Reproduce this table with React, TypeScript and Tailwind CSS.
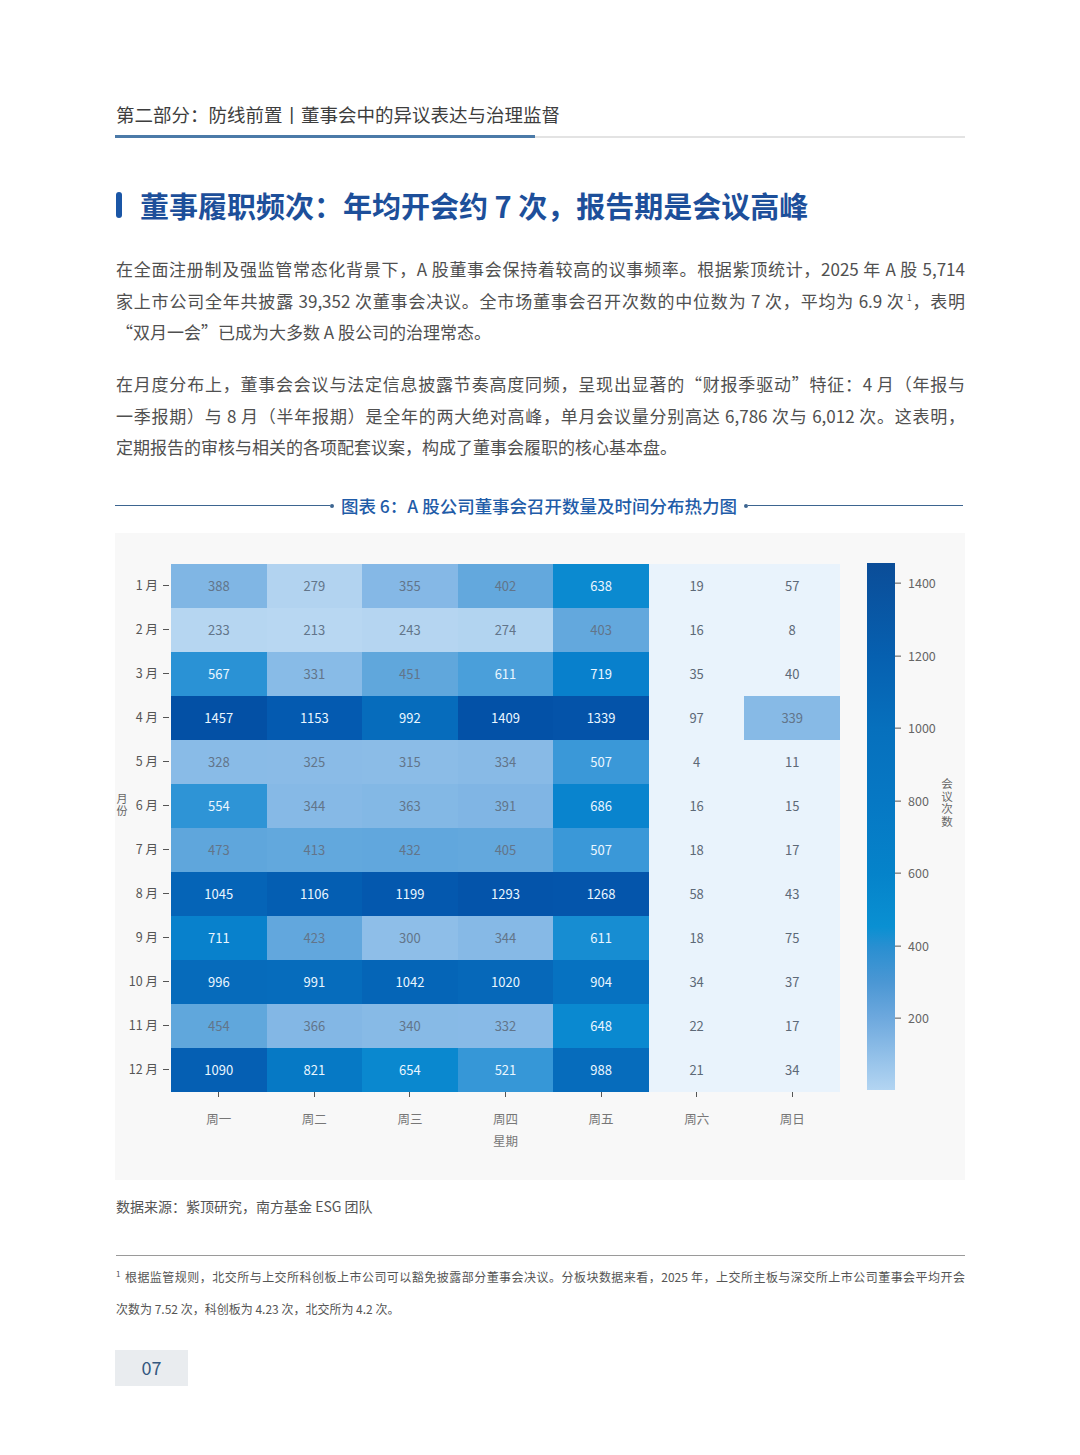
import React from "react";

const months = ["1 月", "2 月", "3 月", "4 月", "5 月", "6 月", "7 月", "8 月", "9 月", "10 月", "11 月", "12 月"];
const days = ["周一", "周二", "周三", "周四", "周五", "周六", "周日"];

const data: number[][] = [
  [388, 279, 355, 402, 638, 19, 57],
  [233, 213, 243, 274, 403, 16, 8],
  [567, 331, 451, 611, 719, 35, 40],
  [1457, 1153, 992, 1409, 1339, 97, 339],
  [328, 325, 315, 334, 507, 4, 11],
  [554, 344, 363, 391, 686, 16, 15],
  [473, 413, 432, 405, 507, 18, 17],
  [1045, 1106, 1199, 1293, 1268, 58, 43],
  [711, 423, 300, 344, 611, 18, 75],
  [996, 991, 1042, 1020, 904, 34, 37],
  [454, 366, 340, 332, 648, 22, 17],
  [1090, 821, 654, 521, 988, 21, 34],
];

// value -> colour stops, read off the picture
const stops: [number, string][] = [
  [200, "#b9d8f2"],
  [285, "#b1d3f0"],
  [300, "#8ebee8"],
  [345, "#86b9e6"],
  [395, "#7fb5e4"],
  [402, "#63a8dd"],
  [475, "#5fa6dc"],
  [505, "#3a98d8"],
  [560, "#2d93d6"],
  [640, "#0a8ad0"],
  [720, "#0880cc"],
  [830, "#0678c4"],
  [910, "#0672c1"],
  [1000, "#066bbb"],
  [1060, "#0562b5"],
  [1150, "#045ab0"],
  [1300, "#0454aa"],
  [1460, "#0350a5"],
];

const overrides: Record<string, string> = { "2-3": "#4a9fda" };

function hex(c: string) {
  return [1, 3, 5].map((i) => parseInt(c.slice(i, i + 2), 16));
}

function cellColor(v: number): string {
  if (v < 100) return "#e9f3fc";
  if (v <= stops[0][0]) return stops[0][1];
  for (let i = 1; i < stops.length; i++) {
    const [v1, c1] = stops[i];
    const [v0, c0] = stops[i - 1];
    if (v <= v1) {
      const t = (v - v0) / (v1 - v0);
      const a = hex(c0);
      const b = hex(c1);
      const m = a.map((x, k) => Math.round(x + (b[k] - x) * t));
      return `rgb(${m[0]},${m[1]},${m[2]})`;
    }
  }
  return stops[stops.length - 1][1];
}

function textColor(v: number): string {
  if (v < 100) return "#5d6977";
  if (v >= 500) return "#eaf6ff";
  return "#62758a";
}

const barTicks = [1400, 1200, 1000, 800, 600, 400, 200];
const vMin = 4;
const vMax = 1457;
const barHeight = 527;

function Heatmap() {
  return (
    <div className="bg-[#f8f8f8] pt-[31px] pb-[30px]">
      <div className="flex">
        {/* y axis title */}
        <div className="w-[13px] pl-[1px] pt-[229px] flex justify-center">
          <span className="[writing-mode:vertical-rl] text-[11px] leading-[12px] tracking-[1px] text-[#666]">月份</span>
        </div>

        {/* row labels + ticks */}
        <div className="w-[43px] flex flex-col">
          {months.map((m) => (
            <div key={m} className="h-[44px] flex items-center justify-end text-[12.5px] text-[#555]">
              <span>{m}</span>
              <span className="ml-[5px] mr-[2px] w-[6px] h-px bg-[#555]" />
            </div>
          ))}
        </div>

        {/* cells */}
        <div className="w-[669px]">
          <div className="grid grid-cols-7">
            {data.map((row, r) =>
              row.map((v, c) => (
                <div
                  key={`${r}-${c}`}
                  className="h-[44px] flex items-center justify-center text-[13px]"
                  style={{ background: overrides[`${r}-${c}`] ?? cellColor(v), color: textColor(v) }}
                >
                  {v}
                </div>
              ))
            )}
          </div>
          <div className="grid grid-cols-7">
            {days.map((d, i) => (
              <div key={d} className="flex flex-col items-center">
                <span className="w-px h-[5px] bg-[#555]" />
                <span className="mt-[13px] text-[12.5px] leading-[18px] text-[#777]">{d}</span>
                {i === 3 && <span className="mt-[4px] text-[12.5px] leading-[18px] text-[#777]">星期</span>}
              </div>
            ))}
          </div>
        </div>

        {/* colour bar */}
        <div className="ml-[27px] flex">
          <div className="w-[28px] h-[527px] -mt-px bg-[linear-gradient(to_bottom,#0b4d98_0%,#0660b0_17.7%,#0670bd_31.5%,#0678c4_45.2%,#0583ca_59%,#0a90d2_69%,#2a8fd1_73%,#4b97d4_79.6%,#6ea9de_86.5%,#b3d5f2_100%)]" />
          <div className="relative w-[46px] h-[527px] -mt-px">
            {barTicks.map((t) => (
              <div
                key={t}
                className="absolute left-0 flex items-center -translate-y-1/2"
                style={{ top: ((vMax - t) / (vMax - vMin)) * barHeight }}
              >
                <span className="w-[6px] h-px bg-[#555]" />
                <span className="ml-[7px] text-[12.5px] text-[#666]">{t}</span>
              </div>
            ))}
          </div>
          <div className="pt-[214px]">
            <span className="[writing-mode:vertical-rl] text-[11.5px] leading-[12px] tracking-[1px] text-[#666]">会议次数</span>
          </div>
        </div>
      </div>
    </div>
  );
}

function JLine({ children, last = false }: { children: React.ReactNode; last?: boolean }) {
  return (
    <div className={last ? "whitespace-nowrap" : "whitespace-nowrap text-justify [text-align-last:justify]"}>
      {children}
    </div>
  );
}

export default function App() {
  return (
    <div className="min-h-[1455px] bg-white font-['Noto_Sans_CJK_SC',sans-serif]">
      <div className="w-[850px] mx-auto pt-[101px] pb-[69px]">
        {/* page header */}
        <div className="pl-px text-[18.5px] leading-[27px] text-[#3d3d3d]">第二部分：防线前置丨董事会中的异议表达与治理监督</div>
        <div className="mt-[7px] flex items-center h-[3px]">
          <div className="w-[420px] h-[3px] bg-[#4b7aa8]" />
          <div className="flex-1 h-[2px] bg-[#e3e3e3]" />
        </div>

        {/* section title */}
        <div className="mt-[49px] flex items-center h-[36px]">
          <div className="ml-px w-[6px] h-[26px] rounded-full bg-[#1a56a6]" />
          <h1 className="ml-[18px] text-[29px] leading-[36px] font-bold text-[#1d4f9a]">
            董事履职频次：年均开会约 7 次，报告期是会议高峰
          </h1>
        </div>

        {/* body */}
        <div className="mt-[30px] pl-px text-[17px] leading-[31.5px] text-[#505050]">
          <JLine>在全面注册制及强监管常态化背景下，A 股董事会保持着较高的议事频率。根据紫顶统计，2025 年 A 股 5,714</JLine>
          <JLine>
            家上市公司全年共披露 39,352 次董事会决议。全市场董事会召开次数的中位数为 7 次，平均为 6.9 次
            <sup className="text-[9px] leading-none -top-[7px] ml-[2px]">1</sup>，表明
          </JLine>
          <JLine last>“双月一会”已成为大多数 A 股公司的治理常态。</JLine>
        </div>
        <div className="mt-[20.5px] pl-px text-[17px] leading-[31.5px] text-[#505050]">
          <JLine>在月度分布上，董事会会议与法定信息披露节奏高度同频，呈现出显著的“财报季驱动”特征：4 月（年报与</JLine>
          <JLine>一季报期）与 8 月（半年报期）是全年的两大绝对高峰，单月会议量分别高达 6,786 次与 6,012 次。这表明，</JLine>
          <JLine last>定期报告的审核与相关的各项配套议案，构成了董事会履职的核心基本盘。</JLine>
        </div>

        {/* chart title */}
        <div className="mt-[31px] flex items-center h-[24px]">
          <div className="flex-1 h-px bg-[#3d6590]" />
          <div className="w-[4px] h-[4px] rounded-full bg-[#3d6590]" />
          <div className="mx-[7px] text-[17.5px] leading-[24px] font-medium text-[#1f5ca8]">
            图表 6：A 股公司董事会召开数量及时间分布热力图
          </div>
          <div className="w-[4px] h-[4px] rounded-full bg-[#3d6590]" />
          <div className="flex-1 h-px bg-[#3d6590] mr-[2px]" />
        </div>

        <div className="mt-[15px]">
          <Heatmap />
        </div>

        <div className="mt-[16px] pl-px text-[14px] leading-[20px] text-[#555]">数据来源：紫顶研究，南方基金 ESG 团队</div>

        {/* footnote */}
        <div className="mt-[39px] ml-px h-px bg-[#9a9a9a]" />
        <div className="mt-[5px] pl-px text-[12px] leading-[32px] text-[#555]">
          <JLine>
            <sup className="text-[8px] leading-none -top-[5px] mr-[4px]">1</sup>根据监管规则，北交所与上交所科创板上市公司可以豁免披露部分董事会决议。分板块数据来看，2025 年，上交所主板与深交所上市公司董事会平均开会
          </JLine>
          <JLine last>次数为 7.52 次，科创板为 4.23 次，北交所为 4.2 次。</JLine>
        </div>

        {/* page number */}
        <div className="mt-[25px] w-[73px] h-[36px] flex items-center justify-center bg-[#e9ecef] text-[18px] text-[#34587f]">
          07
        </div>
      </div>
    </div>
  );
}
